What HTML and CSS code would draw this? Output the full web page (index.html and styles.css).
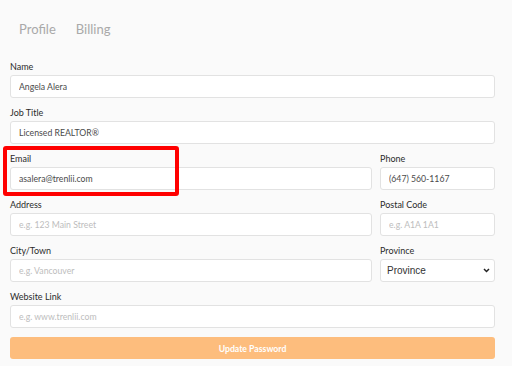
FILE: index.html
```html
<!DOCTYPE html>
<html lang="en">
<head>
    <meta charset="UTF-8">
    <meta name="viewport" content="width=device-width, initial-scale=1.0">
    <title>Account Settings</title>
    <link rel="stylesheet" href="styles.css">
</head>
<body>
    <div class="settings">
        <div class="tabs">
            <span class="tab">Profile</span>
            <span class="tab">Billing</span>
        </div>

        <form class="profile-form" action="#">
            <div class="field">
                <label>Name</label>
                <input type="text" value="Angela Alera">
            </div>
            <div class="field">
                <label>Job Title</label>
                <input type="text" value="Licensed REALTOR®">
            </div>
            <div class="row">
                <div class="field wide highlight">
                    <label>Email</label>
                    <input type="text" value="asalera@trenlii.com">
                </div>
                <div class="field narrow">
                    <label>Phone</label>
                    <input type="text" value="(647) 560-1167">
                </div>
            </div>
            <div class="row">
                <div class="field wide">
                    <label>Address</label>
                    <input type="text" placeholder="e.g. 123 Main Street">
                </div>
                <div class="field narrow">
                    <label>Postal Code</label>
                    <input type="text" placeholder="e.g. A1A 1A1">
                </div>
            </div>
            <div class="row">
                <div class="field wide">
                    <label>City/Town</label>
                    <input type="text" placeholder="e.g. Vancouver">
                </div>
                <div class="field narrow">
                    <label>Province</label>
                    <div class="select">
                        <span>Province</span>
                        <svg width="7" height="5" viewBox="0 0 7 5"><path d="M1 1 L3.5 3.5 L6 1" fill="none" stroke="#222" stroke-width="1.5"/></svg>
                    </div>
                </div>
            </div>
            <div class="field">
                <label>Website Link</label>
                <input type="text" placeholder="e.g. www.trenlii.com">
            </div>
            <button type="button" class="update-btn">Update Password</button>
        </form>
    </div>
</body>
</html>
```

FILE: styles.css
```css
body {
    margin: 0;
    background: #fafafa;
    font-family: Lato, "Open Sans", sans-serif;
    color: #333;
}

.settings {
    width: 485px;
    padding: 0 0 0 10px;
}

.tabs {
    display: flex;
    gap: 20px;
    padding: 20px 0 0 9px;
    height: 36px;
}

.tab {
    font-size: 13px;
    color: #a9a9a9;
    line-height: 18px;
}

.profile-form {
    display: flex;
    flex-direction: column;
    gap: 9px;
    padding-top: 5px;
}

.row {
    display: flex;
    gap: 8px;
}

.field {
    display: flex;
    flex-direction: column;
    gap: 2px;
    position: relative;
}

.field.wide {
    width: 362px;
}

.field.narrow {
    width: 115px;
}

/* red marker around the email box */
.field.highlight::after {
    content: "";
    position: absolute;
    left: -7px;
    top: -7px;
    width: 168px;
    height: 42px;
    border: 4px solid #ff0000;
    border-radius: 3px;
}

label {
    font-size: 9px;
    line-height: 12px;
    color: #2b2b2b;
}

input {
    box-sizing: border-box;
    height: 23px;
    width: 100%;
    border: 1px solid #e2e2e2;
    border-radius: 3px;
    background: #fff;
    padding: 0 8px;
    font-family: Lato, "Open Sans", sans-serif;
    font-size: 8.7px;
    color: #4a4a4a;
}

input::placeholder {
    color: #bdbdbd;
}

.select {
    box-sizing: border-box;
    height: 23px;
    border: 1px solid #e2e2e2;
    border-radius: 3px;
    background: #fff;
    padding: 0 4px 0 6px;
    display: flex;
    align-items: center;
    justify-content: space-between;
    font-family: "Liberation Sans", Arial, sans-serif;
    font-size: 10px;
    color: #333;
}

.update-btn {
    height: 22px;
    border: none;
    border-radius: 3px;
    background: #fdbd7d;
    color: #fff;
    font-family: Lato, "Open Sans", sans-serif;
    font-weight: bold;
    font-size: 8.7px;
    margin-bottom: 7px;
}
```
